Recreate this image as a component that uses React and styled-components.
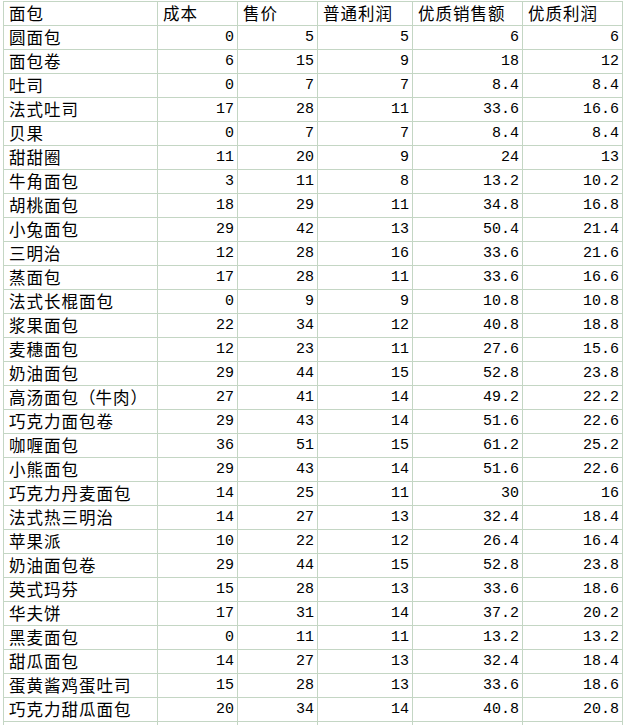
import React from "react";
import styled, { createGlobalStyle } from "styled-components";

const GlobalStyle = createGlobalStyle`
  html, body { margin: 0; padding: 0; background: #fff; overflow: hidden; }
  body { font-family: "Noto Sans CJK SC", "Noto Sans", sans-serif; color: #000; }
`;

const Sheet = styled.div`
  display: grid;
  grid-template-columns: 154px 80px 80px 95px 110px 100px;
  grid-auto-rows: 24px;
  margin: 1px 0 0 3px;
  width: max-content;
  border-left: 1px solid #c4d6c4;
  border-top: 1px solid #c4d6c4;
`;

const Cell = styled.div`
  box-sizing: border-box;
  border-right: 1px solid #c4d6c4;
  border-bottom: 1px solid #c4d6c4;
  padding: ${(p) => (p.$num ? "0 3px 0 0" : "0 0 0 5px")};
  text-align: ${(p) => (p.$num ? "right" : "left")};
  font-family: ${(p) =>
    p.$num ? '"Liberation Mono", monospace' : '"Noto Sans CJK SC", sans-serif'};
  font-size: ${(p) => (p.$num ? "15px" : "16.5px")};
  letter-spacing: ${(p) => (p.$num ? "0" : "1px")};
  line-height: 23px;
  white-space: nowrap;
  overflow: hidden;
`;

// full-width bracket kept at one em, as the sheet's font draws it
const Bracket = styled.span`
  display: inline-block;
  width: 1em;
  text-align: ${(p) => (p.$open ? "right" : "left")};
`;

const header = ["面包", "成本", "售价", "普通利润", "优质销售额", "优质利润"];

const rows = [
  ["圆面包", 0, 5, 5, "6", "6"],
  ["面包卷", 6, 15, 9, "18", "12"],
  ["吐司", 0, 7, 7, "8.4", "8.4"],
  ["法式吐司", 17, 28, 11, "33.6", "16.6"],
  ["贝果", 0, 7, 7, "8.4", "8.4"],
  ["甜甜圈", 11, 20, 9, "24", "13"],
  ["牛角面包", 3, 11, 8, "13.2", "10.2"],
  ["胡桃面包", 18, 29, 11, "34.8", "16.8"],
  ["小兔面包", 29, 42, 13, "50.4", "21.4"],
  ["三明治", 12, 28, 16, "33.6", "21.6"],
  ["蒸面包", 17, 28, 11, "33.6", "16.6"],
  ["法式长棍面包", 0, 9, 9, "10.8", "10.8"],
  ["浆果面包", 22, 34, 12, "40.8", "18.8"],
  ["麦穗面包", 12, 23, 11, "27.6", "15.6"],
  ["奶油面包", 29, 44, 15, "52.8", "23.8"],
  ["高汤面包（牛肉）", 27, 41, 14, "49.2", "22.2"],
  ["巧克力面包卷", 29, 43, 14, "51.6", "22.6"],
  ["咖喱面包", 36, 51, 15, "61.2", "25.2"],
  ["小熊面包", 29, 43, 14, "51.6", "22.6"],
  ["巧克力丹麦面包", 14, 25, 11, "30", "16"],
  ["法式热三明治", 14, 27, 13, "32.4", "18.4"],
  ["苹果派", 10, 22, 12, "26.4", "16.4"],
  ["奶油面包卷", 29, 44, 15, "52.8", "23.8"],
  ["英式玛芬", 15, 28, 13, "33.6", "18.6"],
  ["华夫饼", 17, 31, 14, "37.2", "20.2"],
  ["黑麦面包", 0, 11, 11, "13.2", "13.2"],
  ["甜瓜面包", 14, 27, 13, "32.4", "18.4"],
  ["蛋黄酱鸡蛋吐司", 15, 28, 13, "33.6", "18.6"],
  ["巧克力甜瓜面包", 20, 34, 14, "40.8", "20.8"],
];

const renderName = (name) =>
  name.split(/([（）])/).map((part, i) =>
    part === "（" || part === "）" ? (
      <Bracket key={i} $open={part === "（"}>
        {part}
      </Bracket>
    ) : (
      part
    )
  );

export default function App() {
  return (
    <>
      <GlobalStyle />
      <Sheet>
        {header.map((h) => (
          <Cell key={h}>{h}</Cell>
        ))}
        {rows.map((r) =>
          r.map((v, i) => (
            <Cell key={r[0] + i} $num={i > 0}>
              {i === 0 ? renderName(v) : v}
            </Cell>
          ))
        )}
        {header.map((h) => (
          <Cell key={"blank" + h} />
        ))}
      </Sheet>
    </>
  );
}
